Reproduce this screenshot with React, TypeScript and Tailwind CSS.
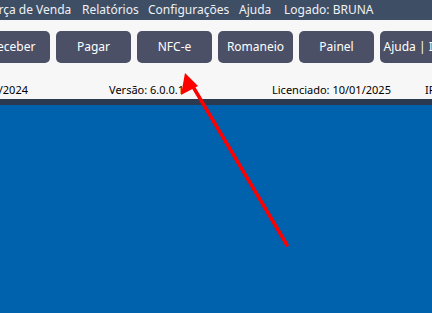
const menu = [
  { label: 'Força de Venda', w: 'w-[97px] -ml-[15px]' },
  { label: 'Relatórios', w: 'w-[66px]' },
  { label: 'Configurações', w: 'w-[91px]' },
  { label: 'Ajuda', w: 'w-[45px]' },
  { label: 'Logado: BRUNA', w: 'w-[120px]' },
];
const buttons = ['Receber', 'Pagar', 'NFC-e', 'Romaneio', 'Painel', 'Ajuda | Info'];

export default function App() {
  return (
    <div
      className="relative flex h-[313px] w-[432px] flex-col overflow-hidden bg-[#0061ad]"
      style={{ fontFamily: '"Noto Sans", "Open Sans", sans-serif' }}
    >
      {/* menu */}
      <div className="flex h-[20px] shrink-0 items-center overflow-hidden whitespace-nowrap bg-[#3e4e65] text-[12px] text-[#eef1f5]">
        {menu.map((m) => (
          <span key={m.label} className={`shrink-0 ${m.w}`}>
            {m.label}
          </span>
        ))}
      </div>

      {/* toolbar + status */}
      <div className="flex h-[79px] shrink-0 flex-col bg-[#f7f7f7]">
        <div className="mt-[11px] flex gap-[6px] whitespace-nowrap">
          {buttons.map((b, i) => (
            <div
              key={b}
              className={`flex h-[32px] w-[75px] shrink-0 items-center justify-center overflow-hidden rounded-[5px] bg-[#4b5066] text-[12px] text-white ${
                i === 0 ? '-ml-[25px]' : ''
              }`}
            >
              {b}
            </div>
          ))}
        </div>
        <div className="mt-[20px] flex whitespace-nowrap text-[11px] leading-[14px] text-black">
          <div className="flex w-[28px] shrink-0 justify-end overflow-hidden">Data: 10/01/2024</div>
          <div className="ml-[81px] w-[163px] shrink-0">Versão: 6.0.0.1</div>
          <div className="w-[153px] shrink-0">Licenciado: 10/01/2025</div>
          <div className="shrink-0">IP: 192.168.0.10</div>
        </div>
      </div>
      <div className="h-[6px] shrink-0 bg-[#2b3a4e]" />

      {/* annotation arrow */}
      <svg className="absolute left-0 top-0" width="432" height="313">
        <line x1="287" y1="245" x2="192" y2="85" stroke="#ff0000" strokeWidth="3.5" strokeLinecap="round" />
        <polygon points="185,73 181,95 198,86" fill="#ff0000" />
      </svg>
    </div>
  );
}
